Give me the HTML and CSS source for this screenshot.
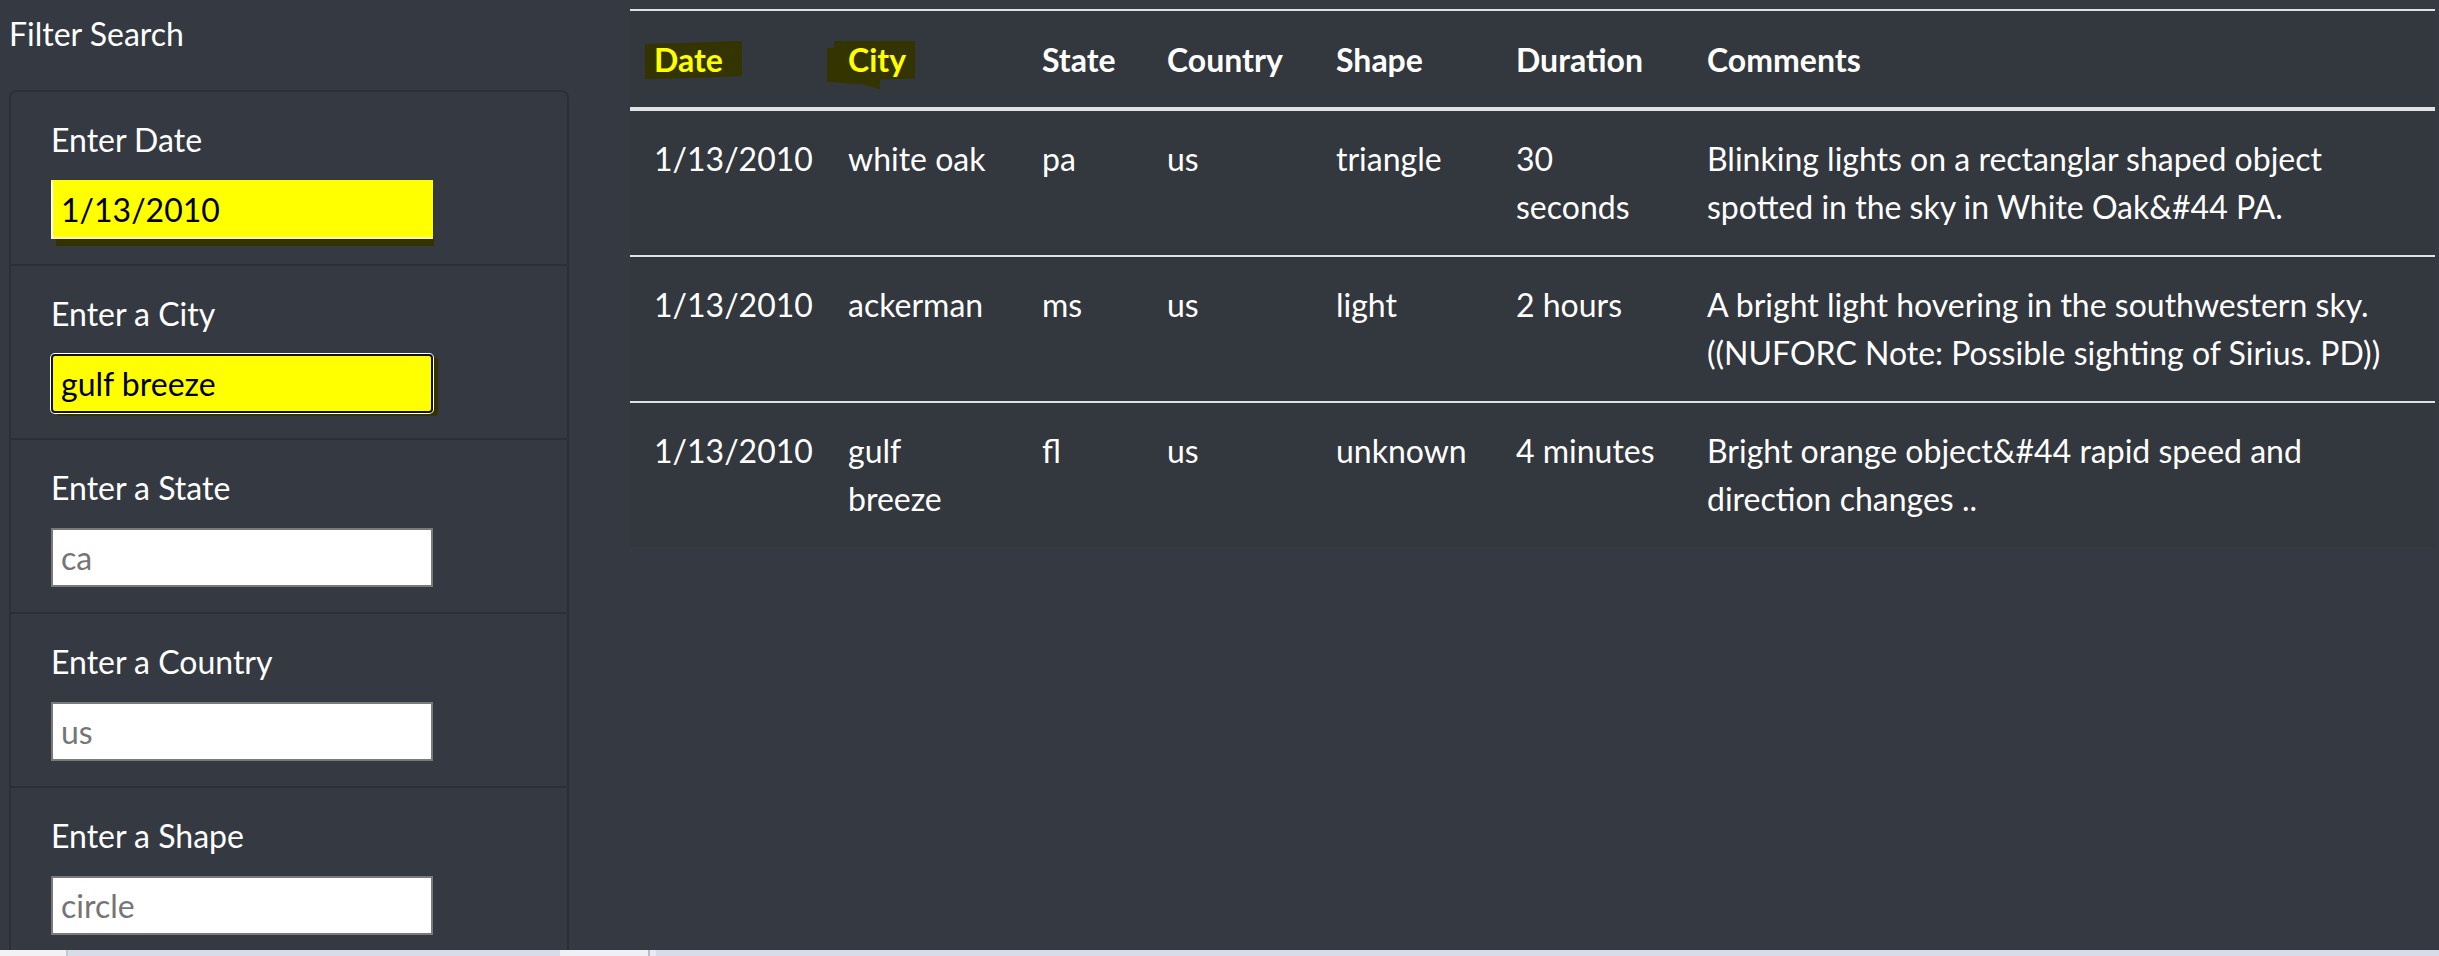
FILE: index.html
```html
<!DOCTYPE html>
<html lang="en">
<head>
<meta charset="utf-8">
<title>UFO Sightings</title>
<link rel="stylesheet" href="styles.css">
</head>
<body>
<div class="page">
  <aside class="sidebar">
    <div class="title">Filter Search</div>
    <ul class="filters">
      <li class="filter">
        <label class="filter-label" for="datetime">Enter Date</label>
        <input class="field field-date" id="datetime" type="text" value="1/13/2010">
      </li>
      <li class="filter">
        <label class="filter-label" for="city">Enter a City</label>
        <input class="field field-city" id="city" type="text" value="gulf breeze">
      </li>
      <li class="filter">
        <label class="filter-label" for="state">Enter a State</label>
        <input class="field" id="state" type="text" placeholder="ca">
      </li>
      <li class="filter">
        <label class="filter-label" for="country">Enter a Country</label>
        <input class="field" id="country" type="text" placeholder="us">
      </li>
      <li class="filter">
        <label class="filter-label" for="shape">Enter a Shape</label>
        <input class="field" id="shape" type="text" placeholder="circle">
      </li>
    </ul>
  </aside>
  <main class="results">
    <table class="ufo-table">
      <colgroup>
        <col class="c-date"><col class="c-city"><col class="c-state"><col class="c-country"><col class="c-shape"><col class="c-duration"><col class="c-comments">
      </colgroup>
      <thead>
        <tr>
          <th><span class="hl hl-date">Date</span></th>
          <th><span class="hl hl-city">City</span></th>
          <th>State</th>
          <th>Country</th>
          <th>Shape</th>
          <th>Duration</th>
          <th>Comments</th>
        </tr>
      </thead>
      <tbody>
        <tr>
          <td>1/13/2010</td><td>white oak</td><td>pa</td><td>us</td><td>triangle</td><td>30 seconds</td>
          <td>Blinking lights on a rectanglar shaped object spotted in the sky in White Oak&amp;#44 PA.</td>
        </tr>
        <tr>
          <td>1/13/2010</td><td>ackerman</td><td>ms</td><td>us</td><td>light</td><td>2 hours</td>
          <td>A bright light hovering in the southwestern sky. ((NUFORC Note: Possible sighting of Sirius. PD))</td>
        </tr>
        <tr>
          <td>1/13/2010</td><td>gulf breeze</td><td>fl</td><td>us</td><td>unknown</td><td>4 minutes</td>
          <td>Bright orange object&amp;#44 rapid speed and direction changes ..</td>
        </tr>
      </tbody>
    </table>
  </main>
</div>
<div class="taskbar">
  <div class="tb tb-a"></div>
  <div class="tb tb-sep"></div>
  <div class="tb tb-b"></div>
  <div class="tb tb-c"></div>
  <div class="tb tb-sep2"></div>
  <div class="tb tb-d"></div>
  <div class="tb tb-e"></div>
</div>
</body>
</html>
```

FILE: styles.css
```css
html, body {
  margin: 0;
  padding: 0;
}
body {
  width: 2439px;
  height: 956px;
  overflow: hidden;
  background: #353a42;
  font-family: Lato, "Open Sans", sans-serif;
  font-size: 32px;
  line-height: 48px;
  color: #ffffff;
}
.page {
  display: flex;
  height: 950px;
  overflow: hidden;
  background: #353a42;
}
.sidebar {
  width: 560px;
  flex: none;
  margin-left: 9px;
}
.title {
  margin-top: 10px;
  height: 48px;
}
.filters {
  list-style: none;
  margin: 32px 0 0 0;
  padding: 0;
  border: 2px solid #2c3036;
  border-radius: 8px;
  border-bottom: none;
}
.filter {
  padding: 24px 40px 25px 40px;
  border-top: 2px solid #2c3036;
  display: flex;
  flex-direction: column;
  align-items: flex-start;
}
.filter:first-child {
  border-top: none;
}
.filter-label {
  display: block;
  margin-bottom: 16px;
}
.field {
  box-sizing: border-box;
  width: 382px;
  height: 59px;
  margin: 0;
  padding: 0 8px;
  border: 2px solid #7a7a7a;
  background: #ffffff;
  font-family: Lato, "Open Sans", sans-serif;
  font-size: 32px;
  color: #000000;
  outline: none;
}
.field::placeholder {
  color: #757575;
}
.field-date {
  background: #ffff00;
  border-color: #ffff00;
  border-left-color: #ffffff;
  border-bottom-color: #f4f4c0;
  box-shadow: 3px 9px 0 -2px #333300;
}
.field-city {
  background: #ffff00;
  border: 2px solid #111111;
  border-radius: 4px;
  box-shadow: 0 0 0 1px #ffffff, 5px 3px 0 0 #333300;
}
.results {
  margin-left: 61px;
  padding-top: 9px;
  width: 1805px;
  flex: none;
}
.ufo-table {
  width: 1805px;
  table-layout: fixed;
  border-collapse: collapse;
  background: #33373e;
  color: #ffffff;
}
.c-date { width: 194px; }
.c-city { width: 194px; }
.c-state { width: 125px; }
.c-country { width: 169px; }
.c-shape { width: 180px; }
.c-duration { width: 191px; }
.c-comments { width: 752px; }
.ufo-table th,
.ufo-table td {
  padding: 24px;
  text-align: left;
  vertical-align: top;
  border-top: 2px solid #dee2e6;
}
.ufo-table th {
  padding-top: 25px;
  padding-bottom: 23px;
  font-weight: 700;
  border-bottom: 4px solid #dee2e6;
}
.hl {
  display: inline-block;
  color: #ffff00;
  background: #343400;
  line-height: 38px;
}
.hl-date {
  margin-left: -9px;
  padding: 0 19px 0 9px;
  clip-path: polygon(0 8%, 40% 5%, 100% 0, 100% 92%, 60% 96%, 0 100%);
}
.hl-city {
  margin-left: -21px;
  padding: 0 9px 10px 21px;
  margin-bottom: -10px;
  clip-path: polygon(8% 0, 100% 0, 100% 78%, 60% 80%, 60% 100%, 40% 90%, 0 85%, 0 15%, 8% 15%);
}
.taskbar {
  display: flex;
  height: 6px;
  background: #d7dce9;
}
.tb { height: 6px; flex: none; }
.tb-a { width: 66px; background: #f2f2f4; }
.tb-sep { width: 2px; background: #c5c9d3; }
.tb-b { width: 492px; background: #d7dce9; }
.tb-c { width: 88px; background: #eef0f6; }
.tb-sep2 { width: 2px; background: #b8bcc8; }
.tb-d { width: 6px; background: #e8ebf2; }
.tb-e { flex: 1; background: #d7dce9; }
```
